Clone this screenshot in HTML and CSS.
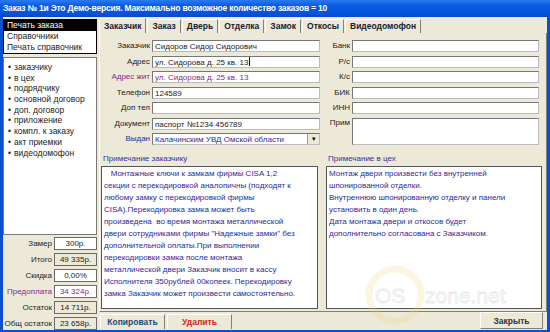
FILE: index.html
```html
<!DOCTYPE html>
<html lang="ru">
<head>
    <meta charset="UTF-8">
    <meta name="viewport" content="width=device-width, initial-scale=1.0">
    <title>Заказ</title>
    <link rel="stylesheet" href="styles.css">
</head>
<body>
<div class="window">
    <div class="titlebar">Заказ № 1и Это Демо-версия. Максимально возможное количество заказов = 10</div>

    <div class="frame">
        <aside class="side">
            <ul class="menu">
                <li class="active">Печать заказа</li>
                <li>Справочники</li>
                <li>Печать справочник</li>
            </ul>

            <ul class="docs">
                <li>заказчику</li>
                <li>в цех</li>
                <li>подрядчику</li>
                <li>основной договор</li>
                <li>доп. договор</li>
                <li>приложение</li>
                <li>компл. к заказу</li>
                <li>акт приемки</li>
                <li>видеодомофон</li>
            </ul>

            <div class="totals">
                <div class="total"><span class="total-label">Замер</span><span class="total-value">300р.</span></div>
                <div class="total"><span class="total-label">Итого</span><span class="total-value readonly">49 335р.</span></div>
                <div class="total"><span class="total-label">Скидка</span><span class="total-value">0,00%</span></div>
                <div class="total purple"><span class="total-label">Предоплата</span><span class="total-value">34 324р.</span></div>
                <div class="total"><span class="total-label">Остаток</span><span class="total-value readonly">14 711р.</span></div>
                <div class="total"><span class="total-label">Общ остаток</span><span class="total-value readonly">23 658р.</span></div>
            </div>
        </aside>

        <main class="main">
            <div class="tabs">
                <span class="tab active">Заказчик</span>
                <span class="tab">Заказ</span>
                <span class="tab">Дверь</span>
                <span class="tab">Отделка</span>
                <span class="tab">Замок</span>
                <span class="tab">Откосы</span>
                <span class="tab">Видеодомофон</span>
            </div>

            <div class="panel">
                <div class="fields">
                    <label class="label r1">Заказчик</label>
                    <div class="input r1">Сидоров Сидор Сидорович</div>
                    <label class="label r2">Адрес</label>
                    <div class="input r2">ул. Сидорова д. 25 кв. 13<span class="caret"></span></div>
                    <label class="label r3 purple">Адрес жит</label>
                    <div class="input r3 purple">ул. Сидорова д. 25 кв. 13</div>
                    <label class="label r4">Телефон</label>
                    <div class="input r4">124589</div>
                    <label class="label r5">Доп тел</label>
                    <div class="input r5"></div>
                    <label class="label r6">Документ</label>
                    <div class="input r6">паспорт №1234 456789</div>
                    <label class="label r7 navy">Выдан</label>
                    <div class="input combo r7 navy">Калачинским УВД Омской области<span class="combo-btn">&#9662;</span></div>

                    <label class="label side-label r1">Банк</label>
                    <div class="input side-input r1"></div>
                    <label class="label side-label r2">Р/с</label>
                    <div class="input side-input r2"></div>
                    <label class="label side-label r3">К/с</label>
                    <div class="input side-input r3"></div>
                    <label class="label side-label r4">БИК</label>
                    <div class="input side-input r4"></div>
                    <label class="label side-label r5">ИНН</label>
                    <div class="input side-input r5"></div>
                    <label class="label side-label r6 top">Прим</label>
                    <div class="input side-input memo"></div>
                </div>

                <div class="notes">
                    <div class="note">
                        <div class="note-title">Примечание заказчику</div>
                        <div class="note-text">&nbsp;&nbsp;&nbsp;Монтажные ключи к замкам фирмы CISA 1,2<br>секции с перекодировкой аналопичны (подходят к<br>любому замку с перекодировкой фирмы<br>CISA).Перекодировка замка может быть<br>произведена&nbsp; во время монтажа металлической<br>двери сотрудниками фирмы "Надежные замки" без<br>дополнительной оплаты.При выполнении<br>перекодировки замка после монтажа<br>металлической двери Заказчик вносит в кассу<br>Исполнителя 350рублей 00копеек. Перекодировку<br>замка Заказчик может произвести самостоятельно.</div>
                    </div>
                    <div class="note">
                        <div class="note-title">Примечание в цех</div>
                        <div class="note-text">Монтаж двери произвести без внутренней<br>шпонированной отделки.<br>Внутреннюю шпонированную отделку и панели<br>установить в один день.<br>Дата монтажа двери и откосов будет<br>дополнительно согласована с Заказчиком.</div>
                    </div>
                </div>
            </div>

            <div class="actions">
                <button class="btn copy">Копировать</button>
                <button class="btn delete">Удалить</button>
                <button class="btn close">Закрыть</button>
            </div>
        </main>
    </div>

    <!-- водяной знак с сайта -->
    <div class="watermark">
        <svg width="190" height="70" viewBox="0 0 190 70">
            <circle cx="40" cy="30" r="26" fill="none" stroke="#f3d27a" stroke-width="7" opacity="0.22"/>
            <text x="20" y="38" font-family="Liberation Sans, sans-serif" font-size="21" fill="none" stroke="#c4c4c4" stroke-width="0.8" opacity="0.4">OS</text>
            <text x="70" y="38" font-family="Liberation Sans, sans-serif" font-size="21" fill="none" stroke="#c4c4c4" stroke-width="0.8" opacity="0.4">zone.net</text>
        </svg>
    </div>
</div>
</body>
</html>
```

FILE: styles.css
```css
body {
    margin: 0;
    font-family: 'Liberation Sans', Arial, sans-serif;
    font-size: 8px;
    color: #222;
    background-color: #ece9d8;
}

.window {
    position: relative;
    width: 550px;
    height: 332px;
    overflow: hidden;
    background-color: #ece9d8;
}

.titlebar {
    height: 17px;
    line-height: 17px;
    padding-left: 3px;
    color: #fff;
    font-weight: bold;
    font-size: 8.5px;
    letter-spacing: -0.2px;
    white-space: nowrap;
    background: linear-gradient(#2a7af2, #0a5ae4 35%, #0654dc 75%, #0a48c4);
}

.frame {
    display: flex;
    gap: 2px;
    height: 313px;
    border: solid #0a4fd0;
    border-width: 0 3px 2px 3px;
}

/* левая колонка */

.side {
    width: 94px;
    display: flex;
    flex-direction: column;
}

.menu {
    margin: 2px 0 0;
    padding: 0;
    list-style: none;
    height: 35px;
    box-sizing: border-box;
    border: 1px solid #000;
    background-color: #fff;
    font-size: 8.5px;
}

.menu li {
    height: 11px;
    line-height: 11px;
    padding-left: 3px;
    white-space: nowrap;
}

.menu .active {
    background-color: #000;
    color: #fff;
}

.docs {
    margin: 3px 0 0;
    padding: 4px 0 0 4px;
    list-style: none;
    height: 178px;
    box-sizing: border-box;
    border: 1px solid #7a7a7a;
    background-color: #fff;
    font-size: 8.5px;
}

.docs li {
    height: 10.7px;
    line-height: 10.7px;
    white-space: nowrap;
}

.docs li::before {
    content: "\2022";
    margin-right: 3px;
}

.totals {
    margin-top: 2px;
    display: flex;
    flex-direction: column;
    gap: 3px;
}

.total {
    display: flex;
    align-items: center;
    gap: 2px;
    height: 13px;
}

.total-label {
    width: 49px;
    text-align: right;
    white-space: nowrap;
}

.total-value {
    width: 43px;
    height: 13px;
    line-height: 11px;
    box-sizing: border-box;
    border: 1px solid #6a6a6a;
    text-align: center;
    background-color: #fff;
}

.total-value.readonly {
    background-color: #ece9d8;
}

.purple {
    color: #862c86;
}

.navy {
    color: #2b2ba0;
}

/* вкладки */

.main {
    flex: 1;
    display: flex;
    flex-direction: column;
}

.tabs {
    display: flex;
    margin-top: 2px;
    height: 14px;
}

.tab {
    padding: 0 4px;
    margin-right: 1px;
    line-height: 13px;
    font-weight: bold;
    font-size: 8.5px;
    color: #1a1a30;
    border-top: 1px solid #fff;
    border-left: 1px solid #fff;
    border-right: 1px solid #808080;
    white-space: nowrap;
}

.tab.active {
    margin-top: -1px;
    line-height: 15px;
}

.panel {
    height: 279px;
    box-sizing: border-box;
    padding: 7px 0 0 1px;
    border-left: 1px solid #fff;
    border-right: 1px solid #808080;
    border-bottom: 1px solid #808080;
}

.fields {
    display: grid;
    grid-template-columns: 49px 168px 28px 187px;
    grid-auto-rows: 12px;
    column-gap: 2px;
    row-gap: 3.5px;
}

.label {
    grid-column: 1;
    text-align: right;
    line-height: 12px;
    white-space: nowrap;
}

.input {
    grid-column: 2;
    height: 12px;
    line-height: 11px;
    box-sizing: border-box;
    padding-left: 2px;
    border: 1px solid #777;
    border-right-color: #bbb;
    border-bottom-color: #bbb;
    background-color: #fff;
    white-space: nowrap;
    overflow: hidden;
}

.side-label {
    grid-column: 3;
}

.side-input {
    grid-column: 4;
}

.label.top {
    line-height: 10px;
}

.r1 { grid-row: 1; }
.r2 { grid-row: 2; }
.r3 { grid-row: 3; }
.r4 { grid-row: 4; }
.r5 { grid-row: 5; }
.r6 { grid-row: 6; }
.r7 { grid-row: 7; }

.memo {
    grid-row: 6 / span 2;
    height: auto;
}

.caret {
    display: inline-block;
    width: 1px;
    height: 9px;
    margin-left: 1px;
    vertical-align: -1px;
    background-color: #000;
}

.combo {
    position: relative;
}

.combo-btn {
    position: absolute;
    right: 0;
    top: 0;
    width: 11px;
    height: 10px;
    line-height: 10px;
    font-size: 7px;
    text-align: center;
    color: #000;
    background-color: #ece9d8;
    border-left: 1px solid #999;
}

/* примечания */

.notes {
    display: flex;
    gap: 8px;
    margin-top: 9px;
}

.note {
    width: 217px;
    display: flex;
    flex-direction: column;
}

.note + .note {
    width: 216px;
}

.note-title {
    height: 10px;
    line-height: 10px;
    padding-left: 2px;
    margin-bottom: 2px;
    color: #33339a;
}

.note-text {
    height: 143px;
    box-sizing: border-box;
    padding: 1px 2px;
    line-height: 12px;
    color: #2a2a9a;
    background-color: #fff;
    border: 1px solid #555;
    white-space: nowrap;
    overflow: hidden;
}

/* кнопки внизу */

.actions {
    display: flex;
    align-items: flex-end;
    gap: 2px;
    height: 17px;
    padding-left: 1px;
}

.btn {
    height: 15px;
    padding: 0;
    font-family: inherit;
    font-size: 8.5px;
    font-weight: bold;
    background-color: #ece9d8;
    border: none;
    border-top: 1px solid #fff;
    border-left: 1px solid #fff;
    border-right: 1px solid #808080;
}

.copy {
    width: 65px;
    color: #1d4a78;
}

.delete {
    width: 65px;
    color: #d41c1c;
}

.close {
    width: 63px;
    height: 17px;
    margin-left: auto;
    margin-right: 4px;
    color: #333;
    border-bottom: 1px solid #808080;
}

.watermark {
    position: absolute;
    left: 355px;
    top: 265px;
    pointer-events: none;
}
```
